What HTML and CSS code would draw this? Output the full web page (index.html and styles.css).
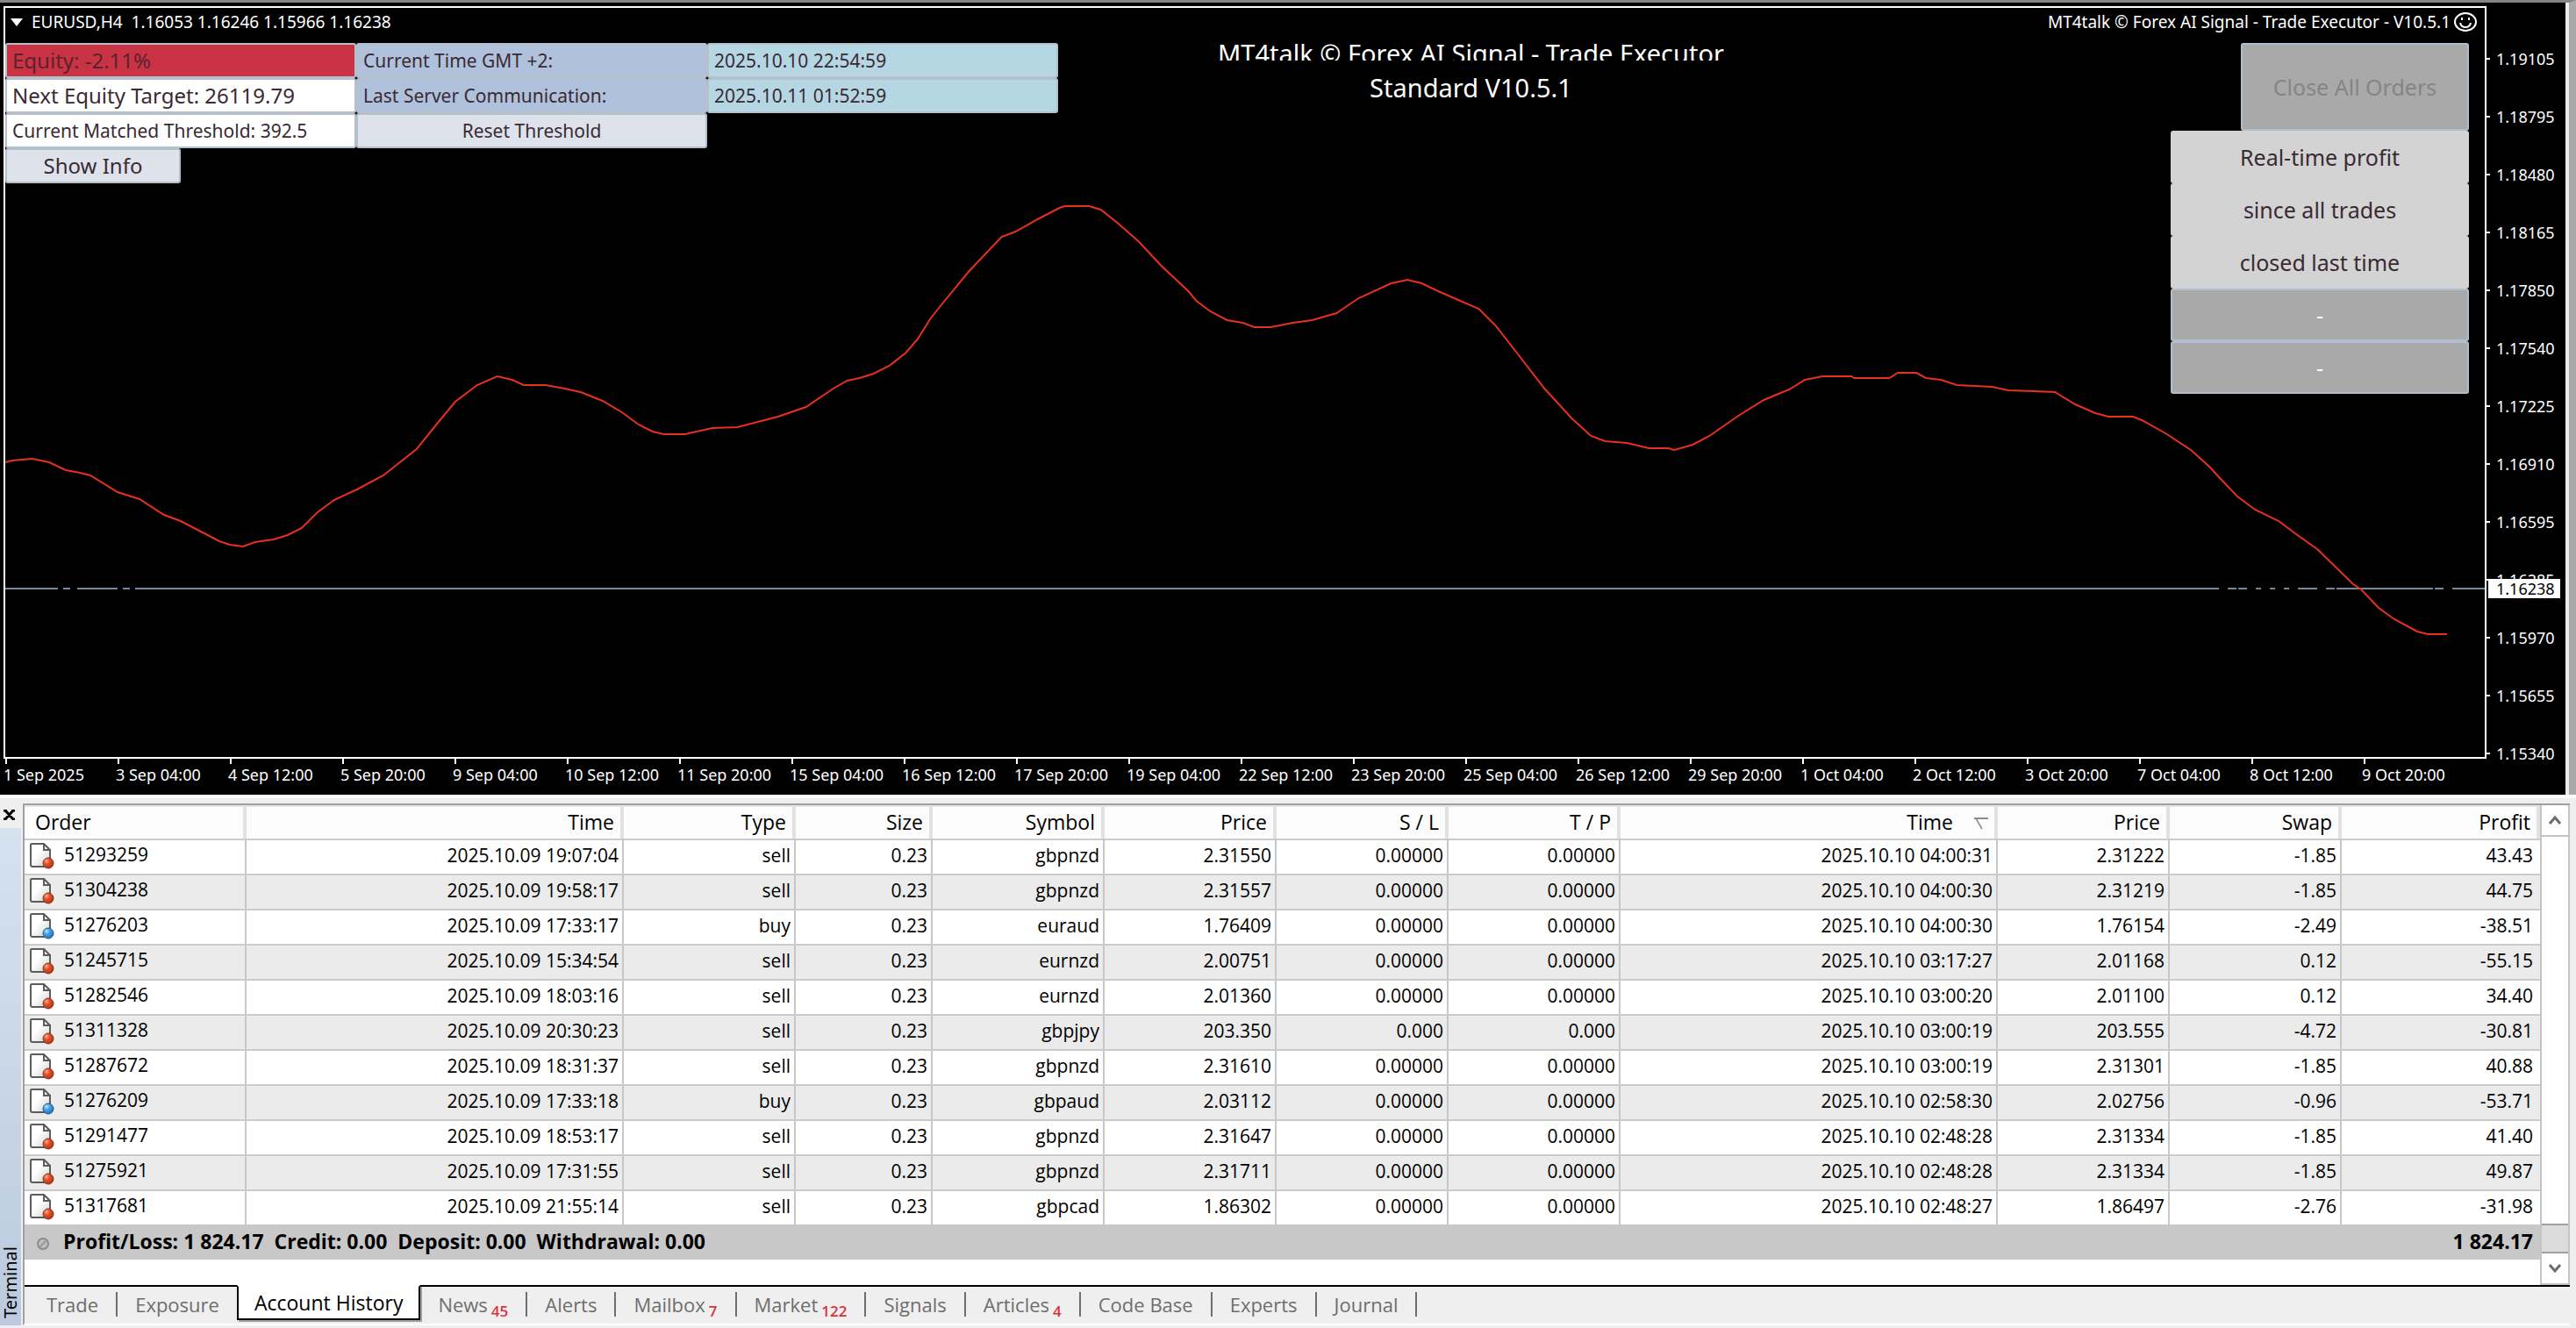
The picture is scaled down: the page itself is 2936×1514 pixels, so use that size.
FILE: index.html
```
<!DOCTYPE html>
<html lang="en">

<head>
   <meta charset="UTF-8">
   <meta name="viewport" content="width=device-width, initial-scale=1.0">
   <title>EURUSD,H4</title>
   <link rel="stylesheet" href="styles.css">
</head>

<body>
   <!-- icons shared by the table rows -->
   <svg class="defs" width="0" height="0">
      <defs>
         <linearGradient id="paper" x1="0" y1="0" x2="1" y2="1">
            <stop offset="0.4" stop-color="#ffffff" />
            <stop offset="1" stop-color="#cfcfcf" />
         </linearGradient>
         <radialGradient id="red" cx="0.35" cy="0.3" r="0.8">
            <stop offset="0" stop-color="#ffb59a" />
            <stop offset="0.35" stop-color="#e0532b" />
            <stop offset="1" stop-color="#a8300f" />
         </radialGradient>
         <radialGradient id="blue" cx="0.35" cy="0.3" r="0.8">
            <stop offset="0" stop-color="#c5e6ff" />
            <stop offset="0.35" stop-color="#4aa3ea" />
            <stop offset="1" stop-color="#1d67ad" />
         </radialGradient>
         <symbol id="page" viewBox="0 0 28 30">
            <path d="M2 1H16L23 8V25Q23 27 21 27H3Q1 27 1 25V2Q1 1 2 1Z" fill="url(#paper)" stroke="#5c5c5c" stroke-width="2" />
            <path d="M16 1V8H23" fill="none" stroke="#5c5c5c" stroke-width="2" />
         </symbol>
         <symbol id="sell" viewBox="0 0 28 30">
            <use href="#page" width="28" height="30" />
            <circle cx="21" cy="23" r="6" fill="url(#red)" stroke="#8e3116" stroke-width="1" />
         </symbol>
         <symbol id="buy" viewBox="0 0 28 30">
            <use href="#page" width="28" height="30" />
            <circle cx="21" cy="23" r="6" fill="url(#blue)" stroke="#1f5c94" stroke-width="1" />
         </symbol>
      </defs>
   </svg>

   <main class="chart">
      <section class="plot">
         <svg class="curve" viewBox="6 9 2827 854" preserveAspectRatio="none">
            <path class="price-line" d="M6 671H66M72 671H80M88 671H134M140 671H148M154 671H2530M2540 671H2550M2552 671H2562M2572 671H2578M2588 671H2594M2604 671H2610M2620 671H2642M2652 671H2662M2664 671H2774M2776 671H2786M2796 671H2833" />
            <polyline class="average" points="6,527 14,525 37,523 56,527 75,536 91,539 103,542 134,561 159,569 187,587 206,594 250,617 262,621 277,623 291,618 312,615 328,610 344,602 362,584 381,570 409,557 437,542 475,512 500,481 519,458 544,439 567,429 584,433 597,439 622,439 644,443 662,447 687,457 709,470 728,484 744,492 757,495 781,495 812,488 841,487 887,475 919,464 950,443 966,434 980,431 996,426 1014,417 1033,402 1046,387 1061,363 1077,343 1105,309 1142,270 1158,264 1183,250 1208,237 1214,235 1242,235 1255,239 1274,254 1299,276 1324,303 1355,332 1364,343 1380,355 1399,365 1417,368 1430,373 1449,373 1474,368 1496,365 1524,357 1549,340 1586,323 1605,319 1621,323 1642,333 1686,352 1705,371 1730,403 1761,443 1792,477 1814,497 1830,503 1855,505 1880,511 1902,511 1909,513 1930,507 1949,497 1982,474 2011,456 2040,444 2058,433 2078,429 2111,429 2114,431 2154,431 2164,425 2185,425 2196,431 2213,433 2231,439 2271,441 2290,445 2319,446 2343,447 2366,461 2389,471 2404,475 2432,475 2442,479 2469,494 2498,513 2519,532 2530,544 2551,566 2571,581 2598,594 2618,609 2642,626 2683,666 2692,672 2712,693 2730,706 2756,720 2768,723 2790,723" />
         </svg>
         <header class="plot-head">
            <svg width="14" height="9" viewBox="0 0 14 9"><path d="M0 0H14L7 9Z" fill="#fff" /></svg>
            <span class="quote">EURUSD,H4&nbsp; 1.16053 1.16246 1.15966 1.16238</span>
            <span class="expert">MT4talk © Forex AI Signal - Trade Executor - V10.5.1</span>
            <svg width="26" height="22" viewBox="0 0 26 22" fill="none" stroke="#fff" stroke-width="2">
               <ellipse cx="13" cy="11" rx="12" ry="10" />
               <path d="M7 12Q8 17 13 17Q18 17 19 12M9 6V9M17 6V9" />
            </svg>
         </header>
         <div class="overlay">
            <div class="panel">
               <span class="cell big red">Equity: -2.11%</span>
               <span class="cell blue">Current Time GMT +2:</span>
               <span class="cell cyan">2025.10.10 22:54:59</span>
               <span class="cell big">Next Equity Target: 26119.79</span>
               <span class="cell blue">Last Server Communication:</span>
               <span class="cell cyan">2025.10.11 01:52:59</span>
               <span class="cell">Current Matched Threshold: 392.5</span>
               <button class="cell button">Reset Threshold</button>
               <button class="cell big button show-info">Show Info</button>
            </div>
            <h1 class="title">
               <span>MT4talk © Forex AI Signal - Trade Executor</span>
               <span>Standard V10.5.1</span>
            </h1>
            <div class="side">
               <button class="close-all" disabled>Close All Orders</button>
               <span class="note">Real-time profit</span>
               <span class="note">since all trades</span>
               <span class="note">closed last time</span>
               <span class="value">-</span>
               <span class="value">-</span>
            </div>
         </div>
      </section>
      <aside class="prices">
         <ul>
            <li>1.19105</li>
            <li>1.18795</li>
            <li>1.18480</li>
            <li>1.18165</li>
            <li>1.17850</li>
            <li>1.17540</li>
            <li>1.17225</li>
            <li>1.16910</li>
            <li>1.16595</li>
            <li>1.16285</li>
            <li>1.15970</li>
            <li>1.15655</li>
            <li>1.15340</li>
         </ul>
         <span class="current">1.16238</span>
      </aside>
      <ul class="times">
         <li>1 Sep 2025</li>
         <li>3 Sep 04:00</li>
         <li>4 Sep 12:00</li>
         <li>5 Sep 20:00</li>
         <li>9 Sep 04:00</li>
         <li>10 Sep 12:00</li>
         <li>11 Sep 20:00</li>
         <li>15 Sep 04:00</li>
         <li>16 Sep 12:00</li>
         <li>17 Sep 20:00</li>
         <li>19 Sep 04:00</li>
         <li>22 Sep 12:00</li>
         <li>23 Sep 20:00</li>
         <li>25 Sep 04:00</li>
         <li>26 Sep 12:00</li>
         <li>29 Sep 20:00</li>
         <li>1 Oct 04:00</li>
         <li>2 Oct 12:00</li>
         <li>3 Oct 20:00</li>
         <li>7 Oct 04:00</li>
         <li>8 Oct 12:00</li>
         <li>9 Oct 20:00</li>
      </ul>
   </main>

   <section class="terminal">
      <div class="strip">
         <button class="close" aria-label="Close">
            <svg width="13" height="12" viewBox="0 0 13 12"><path d="M0 1H4M9 1H13M0 11H4M9 11H13M2 1L11 11M11 1L2 11" stroke="#000" stroke-width="3" /></svg>
         </button>
         <span class="strip-name">Terminal</span>
      </div>
      <div class="pane">
         <div class="history">
            <table>
               <colgroup>
                  <col class="c-order">
                  <col class="c-date">
                  <col class="c-price">
                  <col class="c-size">
                  <col class="c-price">
                  <col class="c-price">
                  <col class="c-price">
                  <col class="c-price">
                  <col class="c-date">
                  <col class="c-price">
                  <col class="c-price">
                  <col>
               </colgroup>
               <thead>
                  <tr>
                     <th>Order</th>
                     <th>Time</th>
                     <th>Type</th>
                     <th>Size</th>
                     <th>Symbol</th>
                     <th>Price</th>
                     <th>S / L</th>
                     <th>T / P</th>
                     <th>Time<svg class="sort" width="16" height="14" viewBox="0 0 16 14" fill="none" stroke="#8a8a8a" stroke-width="2"><path d="M0 1H16" /><path d="M2 1L9 13" stroke-width="1.5" /></svg></th>
                     <th>Price</th>
                     <th>Swap</th>
                     <th>Profit</th>
                  </tr>
               </thead>
               <tbody>
                  <tr><td><svg class="icon"><use href="#sell" /></svg>51293259</td><td>2025.10.09 19:07:04</td><td>sell</td><td>0.23</td><td>gbpnzd</td><td>2.31550</td><td>0.00000</td><td>0.00000</td><td>2025.10.10 04:00:31</td><td>2.31222</td><td>-1.85</td><td>43.43</td></tr>
                  <tr><td><svg class="icon"><use href="#sell" /></svg>51304238</td><td>2025.10.09 19:58:17</td><td>sell</td><td>0.23</td><td>gbpnzd</td><td>2.31557</td><td>0.00000</td><td>0.00000</td><td>2025.10.10 04:00:30</td><td>2.31219</td><td>-1.85</td><td>44.75</td></tr>
                  <tr><td><svg class="icon"><use href="#buy" /></svg>51276203</td><td>2025.10.09 17:33:17</td><td>buy</td><td>0.23</td><td>euraud</td><td>1.76409</td><td>0.00000</td><td>0.00000</td><td>2025.10.10 04:00:30</td><td>1.76154</td><td>-2.49</td><td>-38.51</td></tr>
                  <tr><td><svg class="icon"><use href="#sell" /></svg>51245715</td><td>2025.10.09 15:34:54</td><td>sell</td><td>0.23</td><td>eurnzd</td><td>2.00751</td><td>0.00000</td><td>0.00000</td><td>2025.10.10 03:17:27</td><td>2.01168</td><td>0.12</td><td>-55.15</td></tr>
                  <tr><td><svg class="icon"><use href="#sell" /></svg>51282546</td><td>2025.10.09 18:03:16</td><td>sell</td><td>0.23</td><td>eurnzd</td><td>2.01360</td><td>0.00000</td><td>0.00000</td><td>2025.10.10 03:00:20</td><td>2.01100</td><td>0.12</td><td>34.40</td></tr>
                  <tr><td><svg class="icon"><use href="#sell" /></svg>51311328</td><td>2025.10.09 20:30:23</td><td>sell</td><td>0.23</td><td>gbpjpy</td><td>203.350</td><td>0.000</td><td>0.000</td><td>2025.10.10 03:00:19</td><td>203.555</td><td>-4.72</td><td>-30.81</td></tr>
                  <tr><td><svg class="icon"><use href="#sell" /></svg>51287672</td><td>2025.10.09 18:31:37</td><td>sell</td><td>0.23</td><td>gbpnzd</td><td>2.31610</td><td>0.00000</td><td>0.00000</td><td>2025.10.10 03:00:19</td><td>2.31301</td><td>-1.85</td><td>40.88</td></tr>
                  <tr><td><svg class="icon"><use href="#buy" /></svg>51276209</td><td>2025.10.09 17:33:18</td><td>buy</td><td>0.23</td><td>gbpaud</td><td>2.03112</td><td>0.00000</td><td>0.00000</td><td>2025.10.10 02:58:30</td><td>2.02756</td><td>-0.96</td><td>-53.71</td></tr>
                  <tr><td><svg class="icon"><use href="#sell" /></svg>51291477</td><td>2025.10.09 18:53:17</td><td>sell</td><td>0.23</td><td>gbpnzd</td><td>2.31647</td><td>0.00000</td><td>0.00000</td><td>2025.10.10 02:48:28</td><td>2.31334</td><td>-1.85</td><td>41.40</td></tr>
                  <tr><td><svg class="icon"><use href="#sell" /></svg>51275921</td><td>2025.10.09 17:31:55</td><td>sell</td><td>0.23</td><td>gbpnzd</td><td>2.31711</td><td>0.00000</td><td>0.00000</td><td>2025.10.10 02:48:28</td><td>2.31334</td><td>-1.85</td><td>49.87</td></tr>
                  <tr><td><svg class="icon"><use href="#sell" /></svg>51317681</td><td>2025.10.09 21:55:14</td><td>sell</td><td>0.23</td><td>gbpcad</td><td>1.86302</td><td>0.00000</td><td>0.00000</td><td>2025.10.10 02:48:27</td><td>1.86497</td><td>-2.76</td><td>-31.98</td></tr>
               </tbody>
               <tfoot>
                  <tr>
                     <td colspan="11"><svg class="dot" width="16" height="16" viewBox="0 0 16 16"><circle cx="8" cy="8" r="6" fill="#bdbdbd" stroke="#8c8c8c" stroke-width="2" /><path d="M5 11L11 5" stroke="#999" stroke-width="2" /></svg>Profit/Loss: 1 824.17&nbsp; Credit: 0.00&nbsp; Deposit: 0.00&nbsp; Withdrawal: 0.00</td>
                     <td>1 824.17</td>
                  </tr>
               </tfoot>
            </table>
            <div class="scroll">
               <button class="arrow" aria-label="Scroll up"><svg width="16" height="12" viewBox="0 0 16 12" fill="none" stroke="#6b6b6b" stroke-width="3"><path d="M2 10L8 3L14 10" /></svg></button>
               <div class="track"><div class="thumb"></div></div>
               <button class="arrow" aria-label="Scroll down"><svg width="16" height="12" viewBox="0 0 16 12" fill="none" stroke="#6b6b6b" stroke-width="3"><path d="M2 2L8 9L14 2" /></svg></button>
            </div>
         </div>
         <nav class="tabs">
            <button class="tab">Trade</button>
            <button class="tab last">Exposure</button>
            <button class="tab active">Account History</button>
            <button class="tab">News<sub>45</sub></button>
            <button class="tab">Alerts</button>
            <button class="tab">Mailbox<sub>7</sub></button>
            <button class="tab">Market<sub>122</sub></button>
            <button class="tab">Signals</button>
            <button class="tab">Articles<sub>4</sub></button>
            <button class="tab">Code Base</button>
            <button class="tab">Experts</button>
            <button class="tab">Journal</button>
         </nav>
      </div>
   </section>
</body>

</html>
```
FILE: styles.css
```
* {
   box-sizing: border-box;
   margin: 0;
   padding: 0;
}

body {
   display: flex;
   flex-direction: column;
   min-height: 100vh;
   background-color: #efefef;
   color: #000;
   font-family: "Open Sans", "Noto Sans", sans-serif;
   font-size: 21px;
}

ul {
   list-style: none;
}

button {
   font: inherit;
   color: inherit;
   border: none;
   background: none;
}

.defs {
   position: absolute;
}

/* chart */
.chart {
   flex: 1;
   display: grid;
   grid-template-columns: 1fr 90px;
   grid-template-rows: 1fr 41px;
   background-color: #000;
   color: #fff;
   border-top: 3px solid #858585;
   border-right: 8px solid #a9a9a9;
   box-shadow: inset -4px 0 #ececec;
   padding: 4px 4px 0 4px;
   font-family: "Noto Sans", sans-serif;
   font-size: 18px;
}

.plot {
   position: relative;
   border: 2px solid #fff;
}

.curve {
   position: absolute;
   width: 100%;
   height: 100%;
}

.price-line,
.average {
   fill: none;
   stroke-width: 2px;
   vector-effect: non-scaling-stroke;
}

.price-line {
   stroke: #778899;
}

.average {
   stroke: #e8301f;
}

.plot-head,
.overlay {
   position: relative;
   display: flex;
}

.plot-head {
   align-items: center;
   height: 40px;
   padding: 0 9px 8px 6px;
   font-size: 19px;
}

.plot-head .quote {
   margin-left: 10px;
}

.plot-head .expert {
   margin: 0 4px 0 auto;
}

.overlay {
   align-items: flex-start;
   padding-right: 18px;
}

.panel {
   display: grid;
   grid-template-columns: repeat(3, 400px);
   grid-auto-rows: 40px;
   color: #3a2a33;
   font-size: 21px;
}

.cell {
   background-color: #fff;
   border: 2px solid #b4c1cd;
   border-radius: 3px;
   padding: 0 6px;
   line-height: 36px;
   white-space: nowrap;
}

.big {
   font-size: 24px;
}

.red {
   background-color: #c93343;
   color: #5a2230;
}

.blue {
   background-color: #b0c1dc;
}

.cyan {
   background-color: #b5d7e3;
}

.button {
   background-color: #dde2eb;
   text-align: center;
}

.show-info {
   grid-column: 1;
   width: 200px;
}

.title {
   margin: 0 auto 0 182px;
   font-size: 29px;
   font-weight: 400;
   text-align: center;
   white-space: nowrap;
}

/* the first line is cut at the foot of its label box */
.title span {
   display: block;
   line-height: 40px;
}

.title span:first-child {
   height: 20px;
   margin-bottom: 11px;
   line-height: 24px;
   overflow: hidden;
}

.side {
   display: flex;
   flex-direction: column;
   width: 340px;
   font-size: 25px;
   text-align: center;
}

.close-all,
.value {
   background-color: #a9a9a9;
   border: 2px solid #b0bfcd;
   border-radius: 3px;
}

.close-all {
   align-self: flex-end;
   width: 260px;
   height: 100px;
   color: #858585;
}

.note,
.value {
   height: 60px;
   line-height: 56px;
}

.note {
   background-color: #d3d3d3;
   border: 2px solid #d3d3d3;
   border-radius: 3px;
   color: #3a2a33;
}

.prices {
   position: relative;
   grid-row: 1 / 3;
   grid-column: 2;
   padding-top: 27px;
}

.prices li {
   display: flex;
   align-items: center;
   height: 66px;
}

.prices li::before {
   content: "";
   width: 4px;
   height: 2px;
   margin-right: 7px;
   background-color: #fff;
}

.current {
   position: absolute;
   top: 653px;
   left: 2px;
   width: 82px;
   padding-left: 9px;
   line-height: 22px;
   background-color: #fff;
   color: #000;
}

.times {
   display: flex;
   overflow: hidden;
}

.times li {
   flex: 0 0 128px;
   white-space: nowrap;
   line-height: 24px;
}

.times li::before {
   content: "";
   display: block;
   width: 2px;
   height: 6px;
   margin-left: 2px;
   background-color: #fff;
}

/* terminal */
.terminal {
   display: flex;
   border-top: 4px solid #fbfbfb;
   padding: 0 7px 0 0;
}

.strip {
   display: flex;
   flex-direction: column;
   width: 24px;
   margin-right: 2px;
   margin-bottom: 3px;
   background: linear-gradient(#d6e4f0, #bccadf);
}

.close {
   height: 34px;
   padding-left: 4px;
   background-color: #efefef;
   text-align: left;
}

.strip-name {
   margin-top: auto;
   padding-top: 8px;
   writing-mode: vertical-rl;
   transform: rotate(180deg);
   line-height: 24px;
   font-family: "Noto Sans", sans-serif;
   font-size: 20px;
}

.pane {
   flex: 1;
   margin: 6px 0 3px;
   border-top: 2px solid #a0a0a0;
   border-left: 2px solid #a0a0a0;
   border-bottom: 2px solid #fff;
}

.history {
   display: flex;
   align-items: flex-start;
   background-color: #fff;
   border-bottom: 2px solid #000;
}

table {
   flex: 1;
   table-layout: fixed;
   width: 100%;
   margin-bottom: 29px;
   border-spacing: 0;
}

.c-order {
   width: 253px;
}

.c-date {
   width: 430px;
}

.c-price {
   width: 196px;
}

.c-size {
   width: 156px;
}

th,
td {
   text-align: right;
   white-space: nowrap;
}

th {
   height: 38px;
   padding: 0 7px 2px 12px;
   background-color: #fcfcfc;
   border-top: 2px solid #e6e6e6;
   border-right: 4px solid #e2e2e2;
   font-weight: 400;
   font-size: 23px;
   line-height: 30px;
}

td {
   height: 40px;
   padding: 0 4px 4px 6px;
   border-top: 2px solid #cbcbcb;
   border-right: 2px solid #c8c8c8;
   line-height: 30px;
}

th:first-child,
td:first-child {
   text-align: left;
}

td:last-child {
   padding-right: 8px;
   border-right: none;
}

tbody tr {
   background-color: #fff;
}

tbody tr:nth-child(even) {
   background-color: #ebebeb;
}

tfoot td {
   background-color: #c8c8c8;
   border-color: #c8c8c8;
   font-size: 23px;
   font-weight: 700;
}

.icon {
   width: 28px;
   height: 30px;
   margin-right: 11px;
   vertical-align: middle;
}

.dot {
   margin: 0 15px 0 7px;
   vertical-align: middle;
}

.sort {
   margin-left: 24px;
}

.scroll {
   align-self: stretch;
   display: flex;
   flex-direction: column;
   width: 34px;
   border: 2px solid #c4c4c4;
   border-top: none;
}

.arrow {
   display: flex;
   align-items: center;
   justify-content: center;
   height: 34px;
}

.track {
   flex: 1;
   display: flex;
   border-top: 2px solid #c4c4c4;
}

.thumb {
   align-self: flex-end;
   width: 100%;
   height: 34px;
   background-color: #dcdcdc;
   border: solid #a0a0a0;
   border-width: 2px 0;
}

.tabs {
   display: flex;
   align-items: flex-start;
   height: 42px;
   padding-left: 5px;
   color: #6e6e6e;
   font-size: 22px;
}

.tab {
   height: 28px;
   margin-top: 6px;
   padding: 0 20px;
   border-right: 2px solid #6e6e6e;
   line-height: 22px;
   white-space: nowrap;
}

.tab.last {
   border-right: none;
}

.tab.active {
   height: 40px;
   margin-top: -2px;
   padding: 0 18px;
   background-color: #fff;
   border: 2px solid #000;
   border-top-color: #fff;
   box-shadow: 2px 2px #a0a0a0;
   color: #000;
   font-size: 23px;
}

.tab sub {
   margin-left: 4px;
   color: #dc3239;
   font-size: 17px;
   font-weight: 600;
   line-height: 0;
}
```
